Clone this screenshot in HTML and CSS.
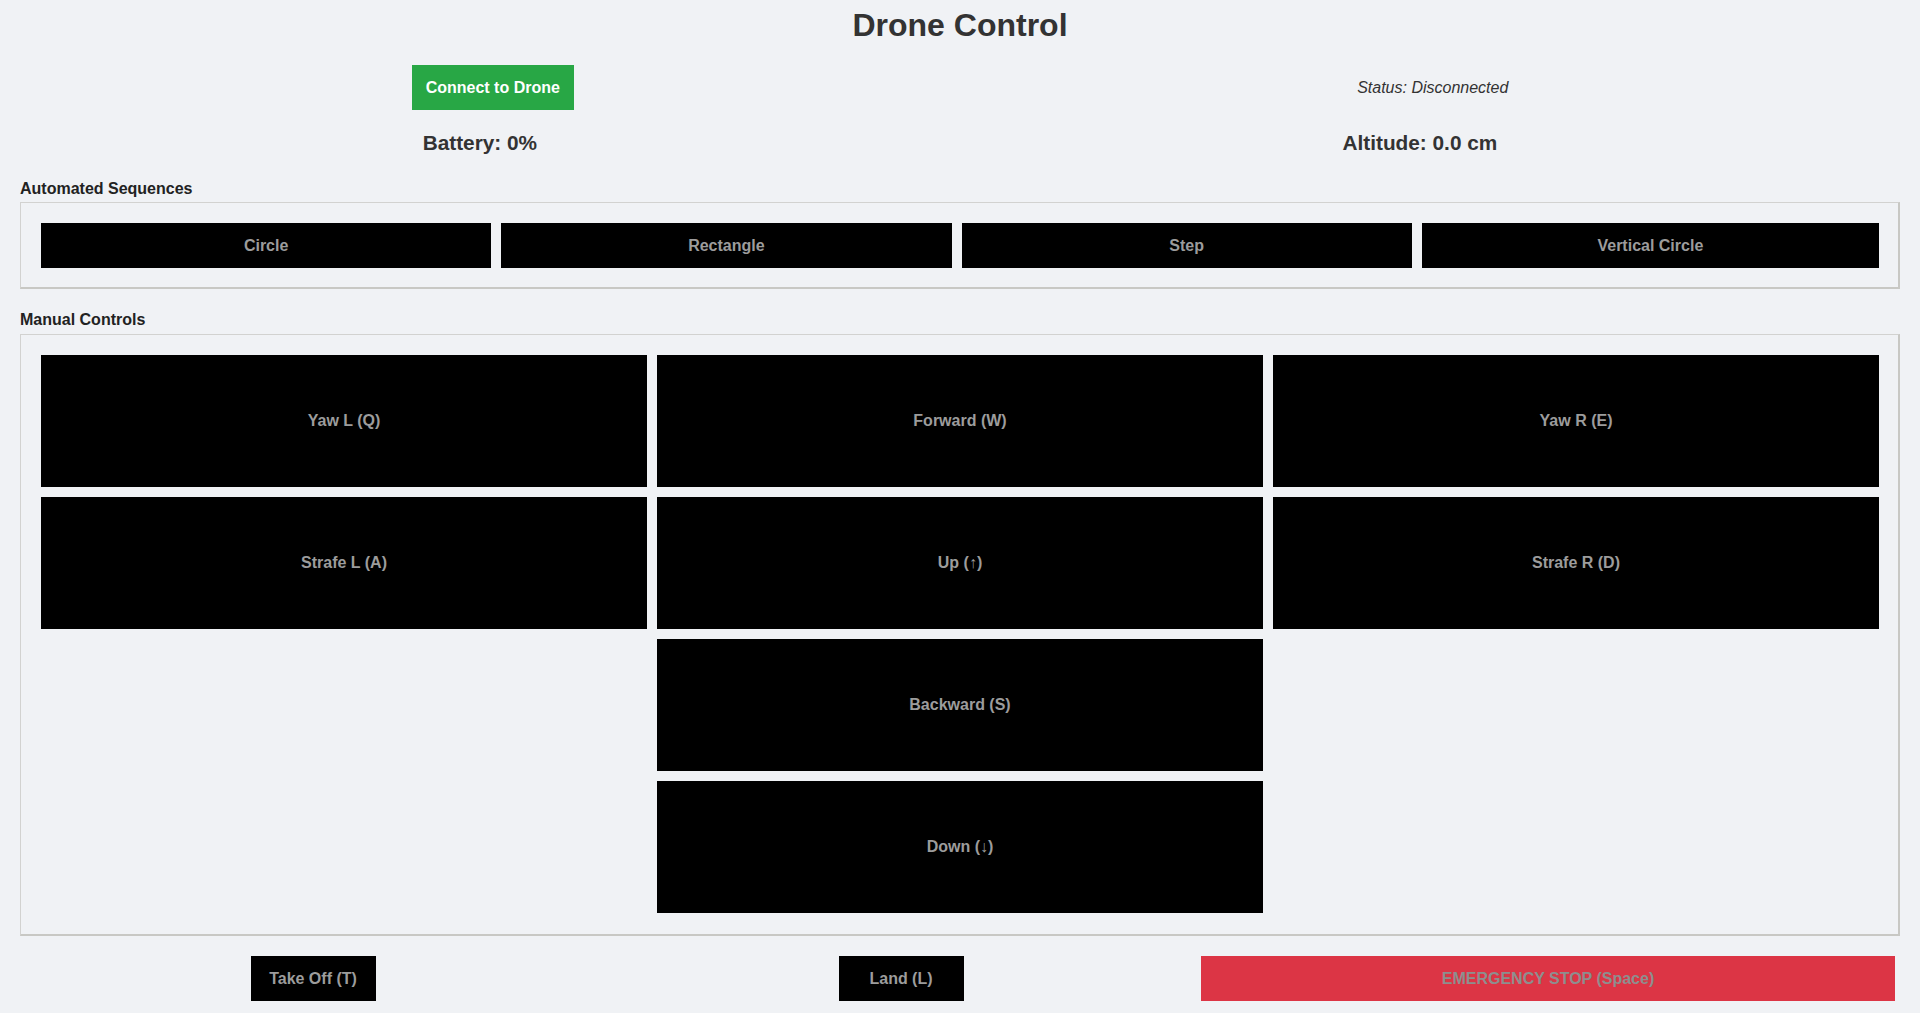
FILE: index.html
```html
<!DOCTYPE html>
<html lang="en">
<head>
<meta charset="utf-8">
<title>Drone Control</title>
<link rel="stylesheet" href="styles.css">
</head>
<body>
  <h1 class="title">Drone Control</h1>
  <div class="row row-top">
    <button class="btn-connect">Connect to Drone</button>
    <span class="status">Status: Disconnected</span>
  </div>
  <div class="row row-stats">
    <span>Battery: 0%</span>
    <span>Altitude: 0.0 cm</span>
  </div>

  <div class="section-label first">Automated Sequences</div>
  <div class="panel">
    <div class="seq">
      <button class="btn-dark" disabled>Circle</button>
      <button class="btn-dark" disabled>Rectangle</button>
      <button class="btn-dark" disabled>Step</button>
      <button class="btn-dark wide" disabled>Vertical Circle</button>
    </div>
  </div>

  <div class="section-label second">Manual Controls</div>
  <div class="panel panel-manual">
    <div class="manual">
      <button class="btn-dark" disabled>Yaw L (Q)</button>
      <button class="btn-dark" disabled>Forward (W)</button>
      <button class="btn-dark" disabled>Yaw R (E)</button>
      <button class="btn-dark" disabled>Strafe L (A)</button>
      <button class="btn-dark" disabled>Up (↑)</button>
      <button class="btn-dark" disabled>Strafe R (D)</button>
      <button class="btn-dark col2" disabled>Backward (S)</button>
      <button class="btn-dark col2" disabled>Down (↓)</button>
    </div>
  </div>

  <div class="bottom">
    <div class="cell"><button class="btn-dark btn-small" disabled>Take Off (T)</button></div>
    <div class="cell"><button class="btn-dark btn-small" disabled>Land (L)</button></div>
    <div class="cell"><button class="btn-emergency" disabled>EMERGENCY STOP (Space)</button></div>
  </div>
</body>
</html>
```
FILE: styles.css
```css
html, body {
  margin: 0;
  background: #f0f2f5;
}
body {
  padding: 0 20px;
  font-family: "Liberation Sans", Arial, sans-serif;
  color: #333;
}
button {
  font-family: "Liberation Sans", Arial, sans-serif;
  font-weight: bold;
  font-size: 16px;
  border: none;
  margin: 0;
  padding: 0;
}
.title {
  margin: 0;
  padding-top: 7px;
  font-size: 32px;
  line-height: 37px;
  text-align: center;
  color: #333;
}
.row {
  display: flex;
  justify-content: space-around;
  align-items: center;
}
.row-top {
  margin-top: 21px;
  height: 45px;
}
.btn-connect {
  background: #28a745;
  color: #fff;
  height: 45px;
  padding: 0 14px;
}
.status {
  font-style: italic;
  font-size: 16px;
  color: #333;
}
.row-stats {
  margin-top: 21px;
  font-size: 20.8px;
  font-weight: bold;
  line-height: 24px;
  color: #333;
}
.section-label {
  margin: 21px 0 4px;
  font-size: 16px;
  font-weight: bold;
  line-height: 18px;
  color: #222;
}
.section-label.first {
  margin-top: 25px;
}
.section-label.second {
  margin: 22px 0 5px;
}
.panel {
  border-style: solid;
  border-width: 1px 2px 2px 1px;
  border-color: #d2d2d0 #c8c8c4 #c8c8c4 #d2d2d0;
  padding: 20px 19px 19px 20px;
}
.panel-manual {
  padding-bottom: 21px;
}
.seq {
  display: flex;
  gap: 10px;
}
.seq .btn-dark {
  flex: 1;
  height: 45px;
}
.seq .btn-dark.wide {
  flex: 1.0155;
}
.btn-dark {
  background: #000;
  color: #9c9c9c;
}
.manual {
  display: grid;
  grid-template-columns: 1fr 1fr 1fr;
  grid-auto-rows: 132px;
  gap: 10px;
}
.manual .col2 {
  grid-column: 2;
}
.bottom {
  display: grid;
  grid-template-columns: 586px 590px 1fr;
  margin-top: 20px;
  align-items: center;
}
.cell {
  display: flex;
  justify-content: center;
}
.btn-small {
  width: 125px;
  height: 45px;
}
.btn-emergency {
  flex: 1;
  margin: 0 5px;
  height: 45px;
  background: #dc3545;
  color: #8e8e8e;
}
```
